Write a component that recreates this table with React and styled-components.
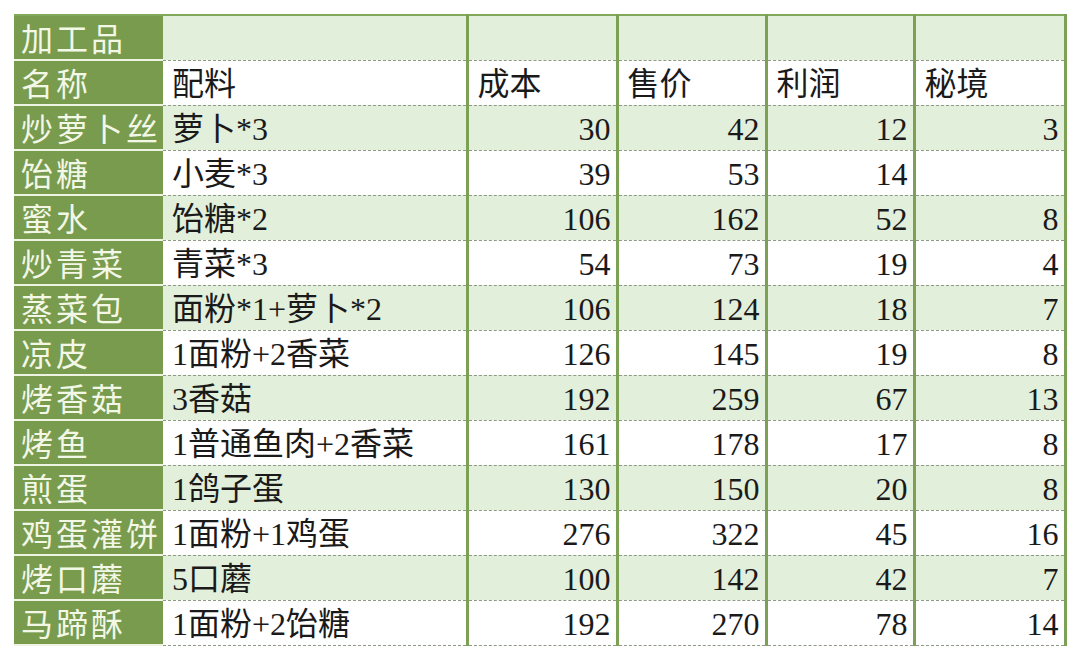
import styled, { createGlobalStyle } from 'styled-components'

const rows = [
	['炒萝卜丝', '萝卜*3', 30, 42, 12, 3],
	['饴糖', '小麦*3', 39, 53, 14, ''],
	['蜜水', '饴糖*2', 106, 162, 52, 8],
	['炒青菜', '青菜*3', 54, 73, 19, 4],
	['蒸菜包', '面粉*1+萝卜*2', 106, 124, 18, 7],
	['凉皮', '1面粉+2香菜', 126, 145, 19, 8],
	['烤香菇', '3香菇', 192, 259, 67, 13],
	['烤鱼', '1普通鱼肉+2香菜', 161, 178, 17, 8],
	['煎蛋', '1鸽子蛋', 130, 150, 20, 8],
	['鸡蛋灌饼', '1面粉+1鸡蛋', 276, 322, 45, 16],
	['烤口蘑', '5口蘑', 100, 142, 42, 7],
	['马蹄酥', '1面粉+2饴糖', 192, 270, 78, 14],
]

const GlobalStyle = createGlobalStyle`
	body {
		margin: 0;
		background: #ffffff;
	}
`

const Sheet = styled.table`
	margin: 14px 0 0 14px;
	width: 1051px;
	table-layout: fixed;
	border-collapse: collapse;
	border-top: 2px solid #82a85c;
	border-right: 3px solid #7ca155;
	font-family: 'Liberation Serif', 'Noto Sans CJK SC', serif;
	font-size: 32px;
	color: #1a1a1a;
`

const Row = styled.tr`
	height: 45px;
	background: ${(p) => (p.$tinted ? '#e2efda' : '#ffffff')};
`

const NameCell = styled.td`
	background: #789b4e;
	color: #f3f7e6;
	font-family: 'Noto Sans CJK SC', sans-serif;
	font-size: 32px;
	letter-spacing: 3px;
	padding: 0 0 2px 7px;
	line-height: 40px;
	white-space: nowrap;
	overflow: hidden;
	border-bottom: 2px solid #eef3e2;
	box-sizing: border-box;
`

const Cell = styled.td`
	padding: 3px ${(p) => (p.$num ? '5px' : '0')} 0 ${(p) => (p.$num ? '0' : '9px')};
	line-height: 40px;
	text-align: ${(p) => (p.$num ? 'right' : 'left')};
	white-space: nowrap;
	border-bottom: 1px dashed #8f9a86;
	border-left: ${(p) => (p.$edge ? '3px solid #7ca155' : 'none')};
	box-sizing: border-box;
`

const widths = [149, 304, 150, 149, 148, 151]

const App = () => (
	<>
		<GlobalStyle />
		<Sheet>
			<colgroup>
				{widths.map((w, i) => (
					<col key={i} style={{ width: w }} />
				))}
			</colgroup>
			<tbody>
				<Row $tinted>
					<NameCell>加工品</NameCell>
					<Cell />
					<Cell $edge />
					<Cell $edge />
					<Cell $edge />
					<Cell $edge />
				</Row>
				<Row>
					<NameCell>名称</NameCell>
					<Cell>配料</Cell>
					<Cell $edge>成本</Cell>
					<Cell $edge>售价</Cell>
					<Cell $edge>利润</Cell>
					<Cell $edge>秘境</Cell>
				</Row>
				{rows.map((r, i) => (
					<Row key={r[0]} $tinted={i % 2 === 0}>
						<NameCell>{r[0]}</NameCell>
						<Cell>{r[1]}</Cell>
						<Cell $edge $num>{r[2]}</Cell>
						<Cell $edge $num>{r[3]}</Cell>
						<Cell $edge $num>{r[4]}</Cell>
						<Cell $edge $num>{r[5]}</Cell>
					</Row>
				))}
			</tbody>
		</Sheet>
	</>
)

export default App
